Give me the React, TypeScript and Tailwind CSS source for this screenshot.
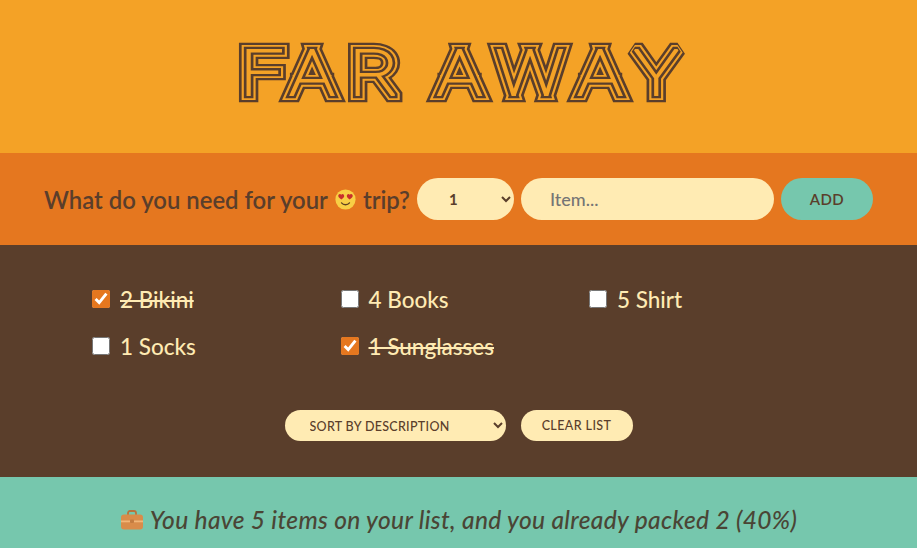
const bodyFont = "font-['Lato','Noto_Sans',sans-serif]"

const LuggageIcon = () => (
  <svg width="24" height="20" viewBox="0 0 24 20" className="shrink-0">
    <path d="M8 5V3a2 2 0 0 1 2-2h4a2 2 0 0 1 2 2v2" fill="none" stroke="#b9733c" strokeWidth="1.8" />
    <rect x="1" y="4.5" width="22" height="15" rx="3" fill="#d98c4a" />
    <rect x="1" y="10.5" width="22" height="1.8" fill="#f1b678" />
    <rect x="10" y="9.5" width="4" height="3.6" rx="0.8" fill="#c47c40" />
  </svg>
)

const HeartEyes = () => (
  <svg width="21" height="21" viewBox="0 0 20 20" className="mx-[7px] shrink-0">
    <circle cx="10" cy="10" r="9.6" fill="#f8cf45" />
    <path d="M6 5.4c-1.4-1.4-3.4 0-2.8 1.8.3 1 1.6 2 2.9 2.8 1.2-.8 2.4-1.9 2.6-2.9.4-1.7-1.4-3-2.7-1.7z" fill="#c9302c" />
    <path d="M14 5.4c-1.3-1.3-3.1 0-2.7 1.7.2 1 1.4 2.1 2.6 2.9 1.3-.8 2.6-1.8 2.9-2.8.6-1.8-1.4-3.2-2.8-1.8z" fill="#c9302c" />
    <path d="M6.2 13.2c1.8 2.4 5.8 2.4 7.6 0" fill="none" stroke="#5f4320" strokeWidth="1.2" strokeLinecap="round" />
  </svg>
)

// nested strokes of one thin word give the parallel lines of the logo
const strokes = [
  { width: 16, color: "#5a3e2b" },
  { width: 11, color: "#f4a226" },
  { width: 7, color: "#5a3e2b" },
  { width: 2, color: "#f4a226" },
]

const Logo = () => (
  <svg width="560" height="90" viewBox="0 0 560 90" role="img" aria-label="Far Away">
    <g transform="scale(1.2 1)">
      {strokes.map((s) => (
        <text
          key={s.width}
          x="51 92 142 192 215 264 332 379"
          y="63"
          fontFamily="Roboto, sans-serif"
          fontSize="63"
          fontWeight="100"
          fill="#f4a226"
          stroke={s.color}
          strokeWidth={s.width}
          strokeLinejoin="miter"
          strokeMiterlimit="2"
          vectorEffect="non-scaling-stroke"
        >
          FAR AWAY
        </text>
      ))}
    </g>
  </svg>
)

const items = [
  { id: 1, label: "2 Bikini", packed: true },
  { id: 2, label: "4 Books", packed: false },
  { id: 3, label: "5 Shirt", packed: false },
  { id: 4, label: "1 Socks", packed: false },
  { id: 5, label: "1 Sunglasses", packed: true },
]

const App = () => {
  return (
    <div className={`h-[548px] flex flex-col text-[#5a3e2b] ${bodyFont}`}>
      <header className="h-[153px] flex items-center justify-center bg-[#f4a226]">
        <Logo />
      </header>

      <form className="h-[92px] flex items-center justify-center gap-[7px] bg-[#e5771f]">
        <h3 className="flex items-center pt-[2px] text-[23.9px] font-semibold">
          What do you need for your <HeartEyes /> trip?
        </h3>
        <select className="w-[97px] h-[42px] rounded-full bg-[#ffebb3] pl-[28px] text-[15px] font-bold">
          <option>1</option>
        </select>
        <input
          placeholder="Item..."
          className="w-[253px] h-[42px] rounded-full bg-[#ffebb3] px-[29px] text-[18px] font-medium placeholder:text-[#757575]"
        />
        <button type="button" className="w-[92px] h-[42px] rounded-full bg-[#76c7ad] text-[15px] font-semibold tracking-[0.4px]">
          ADD
        </button>
      </form>

      <main className="h-[232px] flex flex-col bg-[#5a3e2b] text-[#ffebb3]">
        <ul className="grid grid-cols-[248.5px_248.5px_248.5px] gap-y-[23px] pt-[42px] pl-[92px]">
          {items.map((item) => (
            <li key={item.id} className="h-[24px] flex items-center gap-[10px] text-[22.5px] font-medium">
              <input type="checkbox" defaultChecked={item.packed} className="w-[18px] h-[18px] accent-[#e5771f]" />
              <span className={item.packed ? "pt-[1px] line-through" : "pt-[1px]"}>{item.label}</span>
            </li>
          ))}
        </ul>
        <div className="mt-[52px] flex justify-center gap-[15px] text-[#5a3e2b]">
          <select className="w-[221px] h-[31px] rounded-full bg-[#ffebb3] pt-[2px] pl-[21px] text-[12.5px] font-medium tracking-[0.3px]">
            <option>SORT BY DESCRIPTION</option>
          </select>
          <button type="button" className="w-[112px] h-[31px] rounded-full bg-[#ffebb3] pt-[2px] text-[12.5px] font-medium tracking-[0.4px]">
            CLEAR LIST
          </button>
        </div>
      </main>

      <footer className="h-[71px] flex items-center justify-center gap-[6px] bg-[#76c7ad] pt-[15px] text-[24.5px] font-medium tracking-[0.35px] text-[#4a4535] italic">
        <LuggageIcon />
        <em>You have 5 items on your list, and you already packed 2 (40%)</em>
      </footer>
    </div>
  )
}

export default App
